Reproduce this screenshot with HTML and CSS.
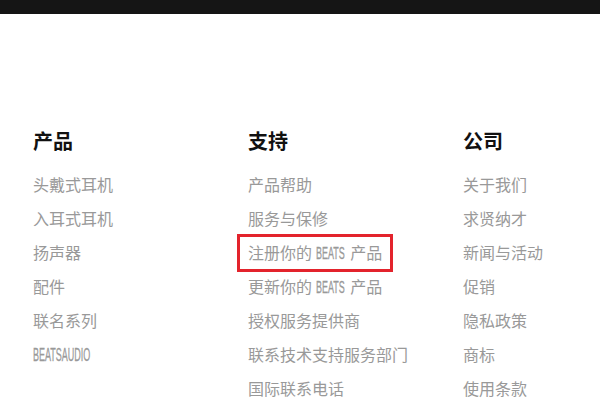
FILE: index.html
```html
<!DOCTYPE html>
<html lang="zh-CN">
<head>
  <meta charset="UTF-8">
  <title>Beats</title>
  <link rel="stylesheet" href="styles.css">
</head>
<body>
<div class="topbar"></div>
<div class="footer">
  <div class="col">
    <h3>产品</h3>
    <ul>
      <li><a href="#">头戴式耳机</a></li>
      <li><a href="#">入耳式耳机</a></li>
      <li><a href="#">扬声器</a></li>
      <li><a href="#">配件</a></li>
      <li><a href="#">联名系列</a></li>
      <li><a href="#"><span class="cond big"><span>BEATSAUDIO</span></span></a></li>
    </ul>
  </div>
  <div class="col">
    <h3>支持</h3>
    <ul>
      <li><a href="#">产品帮助</a></li>
      <li><a href="#">服务与保修</a></li>
      <li><a href="#" class="focus">注册你的 <span class="cond"><span>BEATS</span></span> 产品</a></li>
      <li><a href="#">更新你的 <span class="cond"><span>BEATS</span></span> 产品</a></li>
      <li><a href="#">授权服务提供商</a></li>
      <li><a href="#">联系技术支持服务部门</a></li>
      <li><a href="#">国际联系电话</a></li>
    </ul>
  </div>
  <div class="col last">
    <h3>公司</h3>
    <ul>
      <li><a href="#">关于我们</a></li>
      <li><a href="#">求贤纳才</a></li>
      <li><a href="#">新闻与活动</a></li>
      <li><a href="#">促销</a></li>
      <li><a href="#">隐私政策</a></li>
      <li><a href="#">商标</a></li>
      <li><a href="#">使用条款</a></li>
    </ul>
  </div>
</div>
</body>
</html>
```

FILE: styles.css
```css
* {
  margin: 0;
  padding: 0;
}
body {
  background: #fff;
  font-family: "Noto Sans CJK SC", "Liberation Sans", sans-serif;
}
ul {
  list-style: none;
}
a {
  text-decoration: none;
  color: #999;
}
.topbar {
  height: 14px;
  background-color: #151515;
}
.footer {
  display: flex;
  padding: 115px 0 0 33px;
}
.col {
  flex: none;
  width: 215px;
}
.col.last {
  width: auto;
}
.col h3 {
  font-size: 20px;
  line-height: 24px;
  font-weight: bold;
  color: #111;
}
.col ul {
  margin-top: 14px;
}
.col li {
  font-size: 16px;
  line-height: 34px;
  height: 34px;
  white-space: nowrap;
}
.col li a {
  display: inline-block;
}
.col li a.focus {
  padding: 0 10px;
  margin-left: -10px;
  outline: 3px solid #e3232c;
  outline-offset: -2px;
}
.cond {
  display: inline-block;
  width: 31px;
  font-family: "Liberation Sans", sans-serif;
  font-size: 16px;
  -webkit-text-stroke: .3px #999;
}
.cond span {
  display: inline-block;
  transform: scaleX(.56);
  transform-origin: 0 50%;
}
.cond.big {
  width: 60px;
  font-size: 18px;
}
.cond.big span {
  transform: scaleX(.5);
}
```
